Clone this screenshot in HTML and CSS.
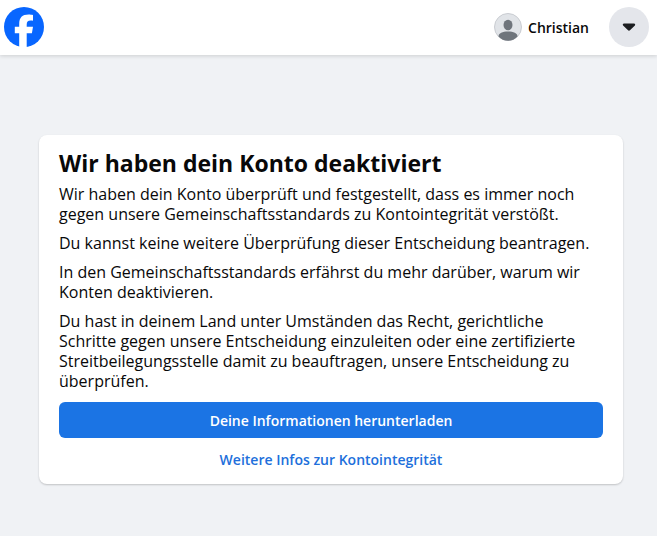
FILE: index.html
```
<!DOCTYPE html>
<html lang="de">
<head>
    <meta charset="UTF-8">
    <meta name="viewport" content="width=device-width, initial-scale=1.0">
    <title>Facebook</title>
    <link rel="stylesheet" href="styles.css">
</head>
<body>
    <header class="header">
        <a class="logo" href="#" aria-label="Facebook">
            <svg viewBox="0 0 40 40" width="40" height="40">
                <circle cx="20" cy="20" r="20" fill="#0866ff"/>
                <path d="M15.200 40V26.300h-4.400v-6.500h4.400v-2.600c0-6.500 3-9.600 9.500-9.600 1.300 0 3.400.2 4.300.5v5.600c-.5 0-1.300-.1-2.300-.1-3 0-4 1.200-4 4.200v2h6.300l-1.100 6.500h-5.200V40z" fill="#fff"/>
            </svg>
        </a>
        <div class="account">
            <a class="profile" href="#">
                <svg viewBox="0 0 28 28" width="28" height="28">
                    <circle cx="14" cy="14" r="13.5" fill="#e1e4e8" stroke="#c9ccd1"/>
                    <ellipse cx="14" cy="12" rx="4.500" ry="5.300" fill="#6f757c"/>
                    <path d="M4.500 23.500c0-3.300 4-5 9.500-5s9.500 1.700 9.500 5C21 26.200 17.800 27.800 14 27.800s-7-1.600-9.500-4.300z" fill="#6f757c"/>
                </svg>
                <span>Christian</span>
            </a>
            <button class="menu" type="button" aria-label="Konto">
                <svg viewBox="0 0 20 20" width="20" height="20">
                    <path d="M5 6.500h10c1.100 0 1.600 1.200.9 2l-4.700 4.600c-.7.700-1.700.7-2.400 0L4.100 8.500c-.7-.8-.2-2 .9-2z" fill="#1c1e21"/>
                </svg>
            </button>
        </div>
    </header>
    <main class="content">
        <section class="card">
            <h1>Wir haben dein Konto deaktiviert</h1>
            <p>Wir haben dein Konto überprüft und festgestellt, dass es immer noch gegen unsere Gemeinschaftsstandards zu Kontointegrität verstößt.</p>
            <p>Du kannst keine weitere Überprüfung dieser Entscheidung beantragen.</p>
            <p>In den Gemeinschaftsstandards erfährst du mehr darüber, warum wir Konten deaktivieren.</p>
            <p>Du hast in deinem Land unter Umständen das Recht, gerichtliche Schritte gegen unsere Entscheidung einzuleiten oder eine zertifizierte Streitbeilegungsstelle damit zu beauftragen, unsere Entscheidung zu überprüfen.</p>
            <button class="download" type="button">Deine Informationen herunterladen</button>
            <a class="more" href="#">Weitere Infos zur Kontointegrität</a>
        </section>
    </main>
</body>
</html>
```
FILE: styles.css
```
*{
    box-sizing: border-box;
    margin: 0;
    padding: 0;
}
body{
    min-height: 100vh;
    background: #f0f2f5;
    color: #080809;
    font-family: "Open Sans", "Noto Sans", sans-serif;
    font-size: 16px;
}
a{
    text-decoration: none;
}
button{
    border: 0;
    font-family: inherit;
    cursor: pointer;
}
svg{
    display: block;
}
.header{
    display: flex;
    align-items: center;
    justify-content: space-between;
    padding: 7px 8px 8px 4px;
    background: #fff;
    box-shadow: 0 1px 4px rgba(0,0,0,.15);
}
.account{
    display: flex;
    align-items: center;
    gap: 20px;
}
.profile{
    display: flex;
    align-items: center;
    gap: 6px;
    color: #080809;
    font-size: 14px;
    font-weight: 600;
}
.menu{
    display: flex;
    align-items: center;
    justify-content: center;
    width: 40px;
    height: 40px;
    border-radius: 50%;
    background: #e4e6eb;
}
.content{
    padding: 80px 34px 40px 39px;
}
.card{
    max-width: 680px;
    margin: 0 auto;
    padding: 14px 20px 6px;
    border-radius: 8px;
    background: #fff;
    box-shadow: 0 1px 2px rgba(0,0,0,.2);
}
h1{
    margin-bottom: 7px;
    font-size: 23px;
    font-weight: 700;
    line-height: 28px;
}
p{
    margin-bottom: 9px;
    font-size: 16px;
    line-height: 20px;
}
.download{
    display: block;
    width: 100%;
    height: 36px;
    margin: 11px 0 4px;
    border-radius: 6px;
    background: #1b74e4;
    color: #fff;
    font-size: 14px;
    font-weight: 600;
}
.more{
    display: block;
    color: #216fdb;
    font-size: 14px;
    font-weight: 600;
    line-height: 36px;
    text-align: center;
}
```
